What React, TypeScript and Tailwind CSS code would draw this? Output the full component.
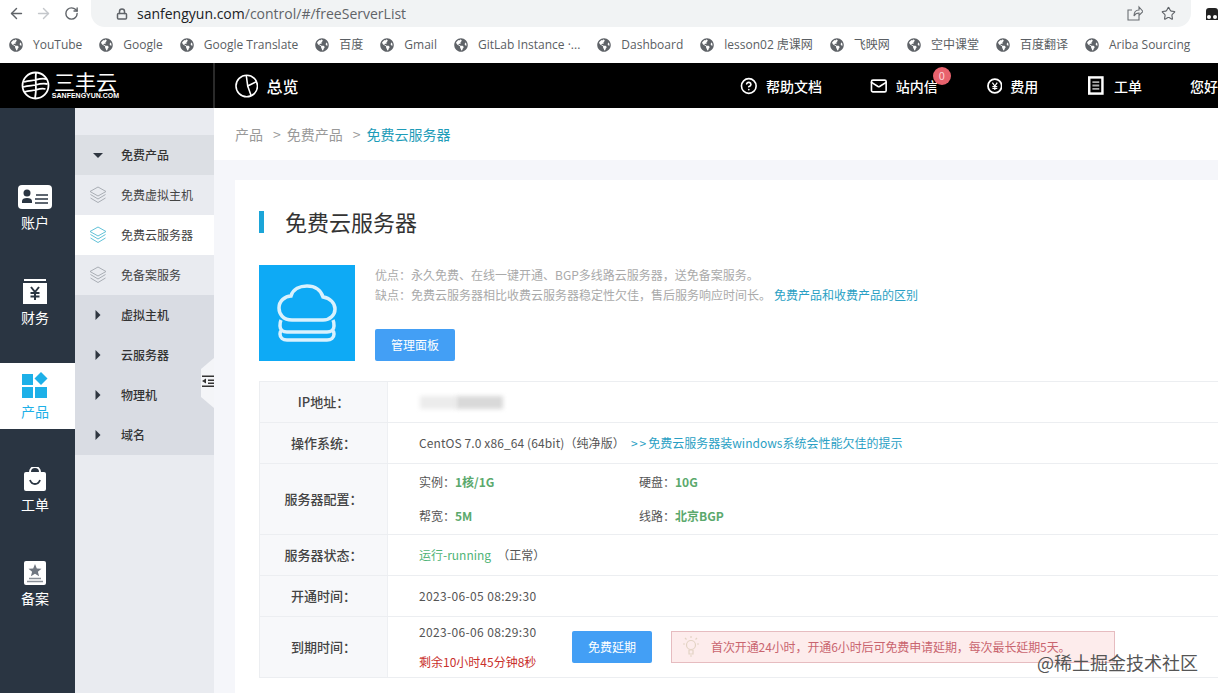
import { ReactNode } from "react";
import { ArrowLeft, ArrowRight, RotateCw, Lock, Star, CircleHelp, Mail } from "lucide-react";
import { FaGlobeAmericas } from "react-icons/fa";

const FONT = "font-['Noto_Sans_CJK_SC','Noto_Sans',sans-serif]";

const BOOKMARKS = [
    "YouTube",
    "Google",
    "Google Translate",
    "百度",
    "Gmail",
    "GitLab Instance ·...",
    "Dashboard",
    "lesson02 虎课网",
    "飞映网",
    "空中课堂",
    "百度翻译",
    "Ariba Sourcing",
];

const RAIL_ICONS: Record<string, ReactNode> = {
    账户: (
        <svg width="34" height="24" viewBox="0 0 34 24">
            <rect width="34" height="24" rx="4" fill="#fff" />
            <circle cx="9" cy="8" r="3.5" fill="#2a3542" />
            <path d="M4 18v-2c0-2 2-3 5-3s5 1 5 3v2z" fill="#2a3542" />
            <path d="M18 10h12M17 14h13M17 18h13" stroke="#2a3542" strokeWidth="1.6" />
        </svg>
    ),
    财务: (
        <svg width="24" height="25" viewBox="0 0 24 25">
            <rect x="1" y="0" width="22" height="2" fill="#fff" />
            <rect y="4" width="24" height="21" fill="#fff" />
            <path d="M8 8l4 5 4-5M12 13v8M7.5 14h9M7.5 17.5h9" stroke="#2a3542" strokeWidth="2" fill="none" />
        </svg>
    ),
    产品: (
        <svg width="26" height="26" viewBox="0 0 26 26" fill="#1db0e8">
            <rect x="0" y="2" width="11" height="11" />
            <rect x="0" y="15" width="11" height="11" />
            <rect x="13" y="15" width="12" height="11" />
            <path d="M19 0l6.5 6.5L19 13l-6.5-6.5z" />
        </svg>
    ),
    工单: (
        <svg width="22" height="24" viewBox="0 0 22 24">
            <path d="M6 6V5a5 5 0 0 1 10 0v1" fill="none" stroke="#fff" strokeWidth="2" />
            <path d="M2 5h18a2 2 0 0 1 2 2v15a2 2 0 0 1-2 2H2a2 2 0 0 1-2-2V7a2 2 0 0 1 2-2z" fill="#fff" />
            <path d="M6 13c1 3 3 4 5 4s4-1 5-4" fill="none" stroke="#2a3542" strokeWidth="1.8" />
        </svg>
    ),
    备案: (
        <svg width="22" height="24" viewBox="0 0 22 24">
            <rect width="22" height="24" rx="2" fill="#fff" />
            <path d="M11 3l1.8 4.4 4.7.3-3.6 3 1.2 4.6-4.1-2.5-4.1 2.5 1.2-4.6-3.6-3 4.7-.3z" fill="#6f7680" />
            <path d="M5 17.5h12M3 20.5h16" stroke="#8a9098" strokeWidth="1.5" />
        </svg>
    ),
};

const LayersIcon = ({ color }: { color: string }) => (
    <svg width="18" height="18" viewBox="0 0 18 18" fill="none" stroke={color} strokeWidth="1">
        <path d="M9 1l8 4.5L9 10 1 5.5z" />
        <path d="M1.5 8.5L9 13l7.500-4.500" />
        <path d="M1.500 12L9 16.500l7.500-4.500" />
    </svg>
);

const Caret = ({ open }: { open?: boolean }) => (
    <svg width="10" height="10" viewBox="0 0 10 10" fill="#2f3640">
        {open ? <path d="M0 3h10L5 8z" /> : <path d="M2.500 0l5 5-5 5z" />}
    </svg>
);

const SubItem = ({ label, active, icon, open }: { label: string; active?: boolean; icon?: boolean; open?: boolean }) => (
    <div
        className={`flex h-10 items-center text-xs ${
            icon ? (active ? "bg-white" : "bg-[#e9ebf0]") : open ? "bg-[#dcdfe4]" : "bg-[#d9dce3]"
        } ${icon ? "text-[#444]" : "font-medium text-[#333]"}`}
    >
        <span className="flex w-[46px] justify-center">
            {icon ? <LayersIcon color={active ? "#62c2d8" : "#a9aeb5"} /> : <Caret open={open} />}
        </span>
        <span>{label}</span>
    </div>
);

const Row = ({ label, h, children, className = "" }: { label: string; h: string; children: ReactNode; className?: string }) => (
    <div className={`flex border-b border-[#eceef1] ${h}`}>
        <div className="flex w-[128px] shrink-0 items-center justify-center border-r border-[#eef0f3] bg-[#f7f8fa] text-[13px] font-medium text-[#444]">
            {label}
        </div>
        <div className={`pl-[31px] text-xs text-[#555] ${className}`}>{children}</div>
    </div>
);

const Spec = ({ k, v }: { k: string; v: string }) => (
    <div>
        {k}：<span className="font-bold text-[#5ba96d]">{v}</span>
    </div>
);

export default function App() {
    return (
        <div className={`relative h-[693px] w-[1218px] overflow-hidden bg-white ${FONT}`}>
            {/* browser chrome */}
            <div className="flex h-[27px] items-center bg-white">
                <ArrowLeft size={17} strokeWidth={2} className="ml-[8px] text-[#5f6368]" />
                <ArrowRight size={17} strokeWidth={2} className="ml-[10px] text-[#c4c7cb]" />
                <RotateCw size={15} strokeWidth={2.2} className="ml-[12px] text-[#5f6368]" />
                <div className="ml-[12px] flex h-[27px] w-[1100px] items-center rounded-br-[14px] rounded-bl-[14px] bg-[#f1f3f4] pr-[12px] pl-[25px]">
                    <Lock size={12} strokeWidth={3} className="text-[#5f6368]" />
                    <span className="ml-[9px] font-['Open_Sans',sans-serif] text-[14px] text-[#202124]">
                        sanfengyun.com<span className="text-[#5f6368]">/control/#/freeServerList</span>
                    </span>
                    <svg width="17" height="17" viewBox="0 0 17 17" fill="none" stroke="#6a6e73" strokeWidth="1.100" className="mr-[18px] ml-auto">
                        <path d="M13 10v5H2V5h4M8 11c0-4 2-6 5-6V2l4 4.500-4 4V8c-2 0-4 1-5 3z" />
                    </svg>
                    <Star size={15} strokeWidth={1.800} className="mr-[3px] text-[#5f6368]" />
                </div>
                <svg width="12" height="12" viewBox="0 0 12 12" className="ml-[15px] shrink-0">
                    <path d="M0 5V3q0-3 3-3h6q3 0 3 3v9H0z" fill="#222" />
                    <circle cx="3" cy="9" r="2" fill="#fff" />
                    <circle cx="9" cy="9" r="2" fill="#fff" />
                </svg>
            </div>
            <div className="flex h-[36px] items-center gap-[17px] pl-[9px] font-['Open_Sans','Noto_Sans_CJK_SC',sans-serif] text-xs whitespace-nowrap text-[#5a5e63]">
                {BOOKMARKS.map((b) => (
                    <div key={b} className="flex items-center gap-[10px]">
                        <FaGlobeAmericas size={14} className="text-[#5f6368]" />
                        <span>{b}</span>
                    </div>
                ))}
            </div>

            {/* top nav */}
            <div className="flex h-[45px] items-center bg-black text-sm font-medium whitespace-nowrap text-white">
                <div className="flex h-full w-[213px] shrink-0 items-center pl-[21px]">
                    <svg width="29" height="29" viewBox="0 0 29 29" fill="none" stroke="#fff">
                        <circle cx="14.500" cy="14.500" r="13" strokeWidth="1.800" />
                        <path d="M3 11c5-2 8-1 11.500-2s6-2 11-1M2 16c6-2 9-1 12.500-2s7-2 12-1M3 21c6-2 8-1 11.500-2s6-2 10-1M15 2c-1 8 1 16-1 25" strokeWidth="1.800" />
                    </svg>
                    <div className="ml-[4px] flex w-[63px] flex-col items-center">
                        <span className="text-[21px] leading-[21px] font-normal">三丰云</span>
                        <span className="font-['Liberation_Sans',sans-serif] text-[7px] leading-[8px] font-bold">SANFENGYUN.COM</span>
                    </div>
                </div>
                <div className="h-full w-[2px] shrink-0 bg-[#2a2a2a]" />
                <svg width="24" height="24" viewBox="0 0 24 24" fill="none" stroke="#fff" strokeWidth="1.600" className="ml-[20px]">
                    <circle cx="12" cy="12" r="11" />
                    <path d="M11.500 1l1.500 11 9-4.500M13 12l3.500 10" />
                </svg>
                <span className="ml-[8px] text-base">总览</span>
                <CircleHelp size={18} strokeWidth={2.200} className="ml-[442px]" />
                <span className="ml-[8px]">帮助文档</span>
                <Mail size={18} strokeWidth={2.200} className="ml-[48px]" />
                <span className="relative ml-[8px]">
                    站内信
                    <span className="absolute top-[-9px] left-[37px] flex h-[18px] w-[18px] items-center justify-center rounded-full bg-[#e8626d] text-[11px] font-normal text-[#fbd5d8]">
                        0
                    </span>
                </span>
                <svg width="16" height="16" viewBox="0 0 16 16" fill="none" stroke="#fff" className="ml-[49px]">
                    <circle cx="8" cy="8" r="7" strokeWidth="1.800" />
                    <path d="M5.500 4.500L8 8l2.500-3.500M8 8v4M5.500 8.500h5M5.500 10.500h5" strokeWidth="1.200" />
                </svg>
                <span className="ml-[8px]">费用</span>
                <svg width="16" height="19" viewBox="0 0 16 19" fill="none" className="ml-[50px]">
                    <rect x="1.250" y="1.250" width="13.500" height="16.500" stroke="#fff" strokeWidth="2.500" />
                    <path d="M4.500 6h7M4.500 9.500h7M4.500 13h7" stroke="#aaa" strokeWidth="1.800" />
                </svg>
                <span className="ml-[10px]">工单</span>
                <span className="ml-[48px]">您好</span>
            </div>

            <div className="flex h-[585px]">
                {/* main rail */}
                <div className="flex w-[75px] shrink-0 flex-col gap-[28px] bg-[#2a3542] pt-[67px]">
                    {Object.keys(RAIL_ICONS).map((name) => (
                        <div
                            key={name}
                            className={`flex h-[66px] flex-col items-center justify-center gap-[4px] pr-[5px] text-sm ${
                                name === "产品" ? "bg-white text-[#1db0e8]" : "text-white"
                            }`}
                        >
                            {RAIL_ICONS[name]}
                            <span className="leading-[18px]">{name}</span>
                        </div>
                    ))}
                </div>

                {/* sub menu */}
                <div className="relative w-[139px] shrink-0 bg-[#e9ebf0] pt-[27px]">
                    <SubItem label="免费产品" open />
                    <SubItem label="免费虚拟主机" icon />
                    <SubItem label="免费云服务器" icon active />
                    <SubItem label="免备案服务" icon />
                    <SubItem label="虚拟主机" />
                    <SubItem label="云服务器" />
                    <SubItem label="物理机" />
                    <SubItem label="域名" />
                    <div className="absolute top-[250px] right-0 flex h-[50px] w-[13px] items-center justify-end bg-[#f4f5f8] pb-[5px] [clip-path:polygon(100%_0,100%_100%,0_78%,0_22%)]">
                        <svg width="12" height="14" viewBox="0 0 12 14" fill="#333">
                            <path d="M0 1.500h12v1.500H0zM6 5.500h6v1.500H6zM6 8.500h6V10H6zM0 11.500h12V13H0zM4 4.500v5l-4-2.500z" />
                        </svg>
                    </div>
                </div>

                {/* content */}
                <div className="flex min-w-0 flex-1 flex-col bg-[#f5f6fa]">
                    <div className="flex h-[52px] shrink-0 items-center bg-white pl-[21px] text-sm text-[#999]">
                        <span>产品</span>
                        <span className="ml-[10px]">&gt;</span>
                        <span className="ml-[6px]">免费产品</span>
                        <span className="ml-[10px]">&gt;</span>
                        <span className="ml-[6px] text-[#1e9cb8]">免费云服务器</span>
                    </div>
                    <div className="mt-[20px] ml-[21px] flex-1 bg-white pt-[31px] pl-[24px]">
                        <div className="flex h-[22px] items-center">
                            <div className="h-[22px] w-[5px] bg-[#1ba5d8]" />
                            <h1 className="ml-[21px] pb-[3px] text-[22px] leading-[22px] font-normal text-[#333]">免费云服务器</h1>
                        </div>
                        <div className="mt-[32px] flex h-[96px]">
                            <div className="flex h-[96px] w-[96px] items-center justify-center bg-[#0eaaf5]">
                                <svg width="60" height="58" viewBox="0 0 60 58" fill="none" stroke="#d9f1fd" strokeWidth="3.500">
                                    <path d="M15 36C6 36 2 30 2 24c0-7 6-12 12-12C16 5 23 2 30 2c8 0 14 4 16 11 7 1 12 6 12 12 0 6-5 11-12 11z" />
                                    <path d="M4 36c-1 2-1 4-1 6 0 4 3 6 7 6h40c4 0 7-2 7-6 0-2 0-4-1-6" />
                                    <path d="M4 47c-1 1-1 2-1 3 0 4 3 6 7 6h40c4 0 7-2 7-6 0-1 0-2-1-3" />
                                </svg>
                            </div>
                            <div className="ml-[20px] flex flex-col text-xs text-[#aaa]">
                                <p className="leading-[20px]">优点：永久免费、在线一键开通、BGP多线路云服务器，送免备案服务。</p>
                                <p className="leading-[20px]">
                                    缺点：免费云服务器相比收费云服务器稳定性欠佳，售后服务响应时间长。
                                    <span className="ml-[3px] text-[#2a9fc4]">免费产品和收费产品的区别</span>
                                </p>
                                <button className="mt-auto h-[32px] w-[80px] rounded-[2px] bg-[#439ff5] text-xs text-white">管理面板</button>
                            </div>
                        </div>
                        <div className="mt-[20px] border-t border-l border-[#eceef1]">
                            <Row label="IP地址：" h="h-[41px]" className="flex items-center">
                                <div className="flex h-[13px] w-[84px] pl-[1px]">
                                    <div className="w-[36px] bg-[#ececec] blur-[2px]" />
                                    <div className="w-[48px] bg-[#d9d9d9] blur-[2px]" />
                                </div>
                            </Row>
                            <Row label="操作系统：" h="h-[41px]" className="flex items-center">
                                <span className="tracking-[0.1px]">CentOS 7.0 x86_64 (64bit)（纯净版）</span>
                                <span className="ml-[6px] text-[#2a9fc4]">
                                    <span className="tracking-[2px]">&gt;&gt;</span>免费云服务器装windows系统会性能欠佳的提示
                                </span>
                            </Row>
                            <Row label="服务器配置：" h="h-[71px]" className="grid w-[440px] grid-cols-[220px_220px] grid-rows-2 items-center py-[1px]">
                                <Spec k="实例" v="1核/1G" />
                                <Spec k="硬盘" v="10G" />
                                <Spec k="帮宽" v="5M" />
                                <Spec k="线路" v="北京BGP" />
                            </Row>
                            <Row label="服务器状态：" h="h-[41px]" className="flex items-center">
                                <span className="text-[#4fb477]">运行-running</span>
                                <span className="ml-[6px]">（正常）</span>
                            </Row>
                            <Row label="开通时间：" h="h-[41px]" className="flex items-center tracking-[0.35px]">
                                2023-06-05 08:29:30
                            </Row>
                            <Row label="到期时间：" h="h-[61px]" className="flex items-center">
                                <div className="flex w-[119px] flex-col gap-[12px] overflow-hidden whitespace-nowrap">
                                    <span className="leading-[18px] tracking-[0.35px]">2023-06-06 08:29:30</span>
                                    <span className="leading-[18px] text-[#c9302c]">剩余10小时45分钟8秒</span>
                                </div>
                                <button className="ml-[34px] h-[32px] w-[80px] rounded-[2px] bg-[#439ff5] text-xs text-white">免费延期</button>
                                <div className="ml-[19px] flex h-[32px] w-[444px] items-center border border-[#e6bcc0] bg-[#fdecec] pl-[10px] text-[#c9656f]">
                                    <svg width="18" height="24" viewBox="0 0 18 24" fill="none" stroke="#e3d3c4" strokeWidth="1.200">
                                        <circle cx="9" cy="10" r="4.500" />
                                        <path d="M7 15h4v4H7zM8 21h2M9 1v2M1 9h2M15 9h2M3 3l1.500 1.500M15 3l-1.500 1.500" />
                                    </svg>
                                    <span className="ml-[11px] whitespace-nowrap tracking-[-0.1px]">首次开通24小时，开通6小时后可免费申请延期，每次最长延期5天。</span>
                                </div>
                            </Row>
                        </div>
                    </div>
                </div>
            </div>

            {/* watermark */}
            <div className="absolute top-[650px] left-[1037px] text-[18px] leading-[24px] whitespace-nowrap text-[#555]">@稀土掘金技术社区</div>
        </div>
    );
}
